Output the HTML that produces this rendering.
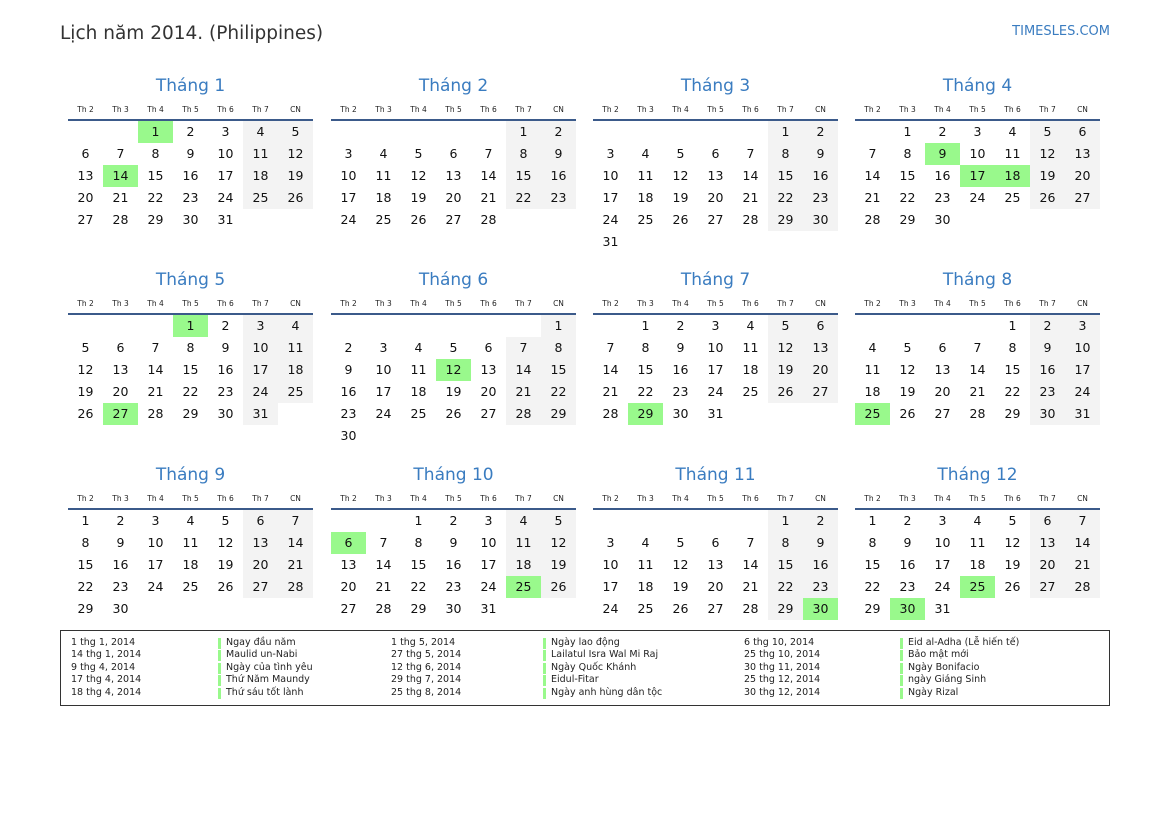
<!DOCTYPE html>
<html><head><meta charset="utf-8">
<style>
*{margin:0;padding:0;box-sizing:border-box}
body{width:1169px;height:827px;background:#fff;position:relative;font-family:"DejaVu Sans","Liberation Sans",sans-serif;color:#111;overflow:hidden}
.title{position:absolute;left:60px;top:21px;font-size:18.5px;color:#333;line-height:26px}
.site{position:absolute;right:59px;top:23px;font-size:13px;color:#3a7cc0;line-height:18px}
.m{position:absolute;width:245px}
.m h2{font-weight:normal;font-size:17px;color:#3a7cc0;text-align:center;height:20px;line-height:22px;margin-bottom:9px}
table{border-collapse:collapse;table-layout:fixed;width:245px}
td{width:35px;height:22px;text-align:center;font-size:12.5px;padding:0;line-height:22px}
tr.hd td{height:15px;line-height:12px;padding-bottom:3px;font-size:7.5px;color:#222;border-bottom:2px solid #3b5a8a}
td.w{background:#f3f3f3}
td.h{background:#99f98c}
.leg{position:absolute;left:60px;top:630px;width:1050px;height:76px;border:1.5px solid #333}
.c{position:absolute;top:6px;font-size:9.5px;line-height:12.4px;color:#222;white-space:nowrap}
.n div{position:relative;padding-left:8px}
.n div:before{content:"";position:absolute;left:0;top:1px;width:3px;height:11px;background:#99f98c}
</style></head><body>
<div class="title">Lịch năm 2014. (Philippines)</div>
<div class="site">TIMESLES.COM</div>

<div class="m" style="left:68px;top:75px"><h2>Tháng 1</h2><table>
<tr class="hd"><td>Th 2</td><td>Th 3</td><td>Th 4</td><td>Th 5</td><td>Th 6</td><td>Th 7</td><td>CN</td></tr>
<tr><td></td><td></td><td class="h">1</td><td>2</td><td>3</td><td class="w">4</td><td class="w">5</td></tr>
<tr><td>6</td><td>7</td><td>8</td><td>9</td><td>10</td><td class="w">11</td><td class="w">12</td></tr>
<tr><td>13</td><td class="h">14</td><td>15</td><td>16</td><td>17</td><td class="w">18</td><td class="w">19</td></tr>
<tr><td>20</td><td>21</td><td>22</td><td>23</td><td>24</td><td class="w">25</td><td class="w">26</td></tr>
<tr><td>27</td><td>28</td><td>29</td><td>30</td><td>31</td><td></td><td></td></tr>
</table></div>

<div class="m" style="left:331px;top:75px"><h2>Tháng 2</h2><table>
<tr class="hd"><td>Th 2</td><td>Th 3</td><td>Th 4</td><td>Th 5</td><td>Th 6</td><td>Th 7</td><td>CN</td></tr>
<tr><td></td><td></td><td></td><td></td><td></td><td class="w">1</td><td class="w">2</td></tr>
<tr><td>3</td><td>4</td><td>5</td><td>6</td><td>7</td><td class="w">8</td><td class="w">9</td></tr>
<tr><td>10</td><td>11</td><td>12</td><td>13</td><td>14</td><td class="w">15</td><td class="w">16</td></tr>
<tr><td>17</td><td>18</td><td>19</td><td>20</td><td>21</td><td class="w">22</td><td class="w">23</td></tr>
<tr><td>24</td><td>25</td><td>26</td><td>27</td><td>28</td><td></td><td></td></tr>
</table></div>

<div class="m" style="left:593px;top:75px"><h2>Tháng 3</h2><table>
<tr class="hd"><td>Th 2</td><td>Th 3</td><td>Th 4</td><td>Th 5</td><td>Th 6</td><td>Th 7</td><td>CN</td></tr>
<tr><td></td><td></td><td></td><td></td><td></td><td class="w">1</td><td class="w">2</td></tr>
<tr><td>3</td><td>4</td><td>5</td><td>6</td><td>7</td><td class="w">8</td><td class="w">9</td></tr>
<tr><td>10</td><td>11</td><td>12</td><td>13</td><td>14</td><td class="w">15</td><td class="w">16</td></tr>
<tr><td>17</td><td>18</td><td>19</td><td>20</td><td>21</td><td class="w">22</td><td class="w">23</td></tr>
<tr><td>24</td><td>25</td><td>26</td><td>27</td><td>28</td><td class="w">29</td><td class="w">30</td></tr>
<tr><td>31</td><td></td><td></td><td></td><td></td><td></td><td></td></tr>
</table></div>

<div class="m" style="left:855px;top:75px"><h2>Tháng 4</h2><table>
<tr class="hd"><td>Th 2</td><td>Th 3</td><td>Th 4</td><td>Th 5</td><td>Th 6</td><td>Th 7</td><td>CN</td></tr>
<tr><td></td><td>1</td><td>2</td><td>3</td><td>4</td><td class="w">5</td><td class="w">6</td></tr>
<tr><td>7</td><td>8</td><td class="h">9</td><td>10</td><td>11</td><td class="w">12</td><td class="w">13</td></tr>
<tr><td>14</td><td>15</td><td>16</td><td class="h">17</td><td class="h">18</td><td class="w">19</td><td class="w">20</td></tr>
<tr><td>21</td><td>22</td><td>23</td><td>24</td><td>25</td><td class="w">26</td><td class="w">27</td></tr>
<tr><td>28</td><td>29</td><td>30</td><td></td><td></td><td></td><td></td></tr>
</table></div>

<div class="m" style="left:68px;top:269px"><h2>Tháng 5</h2><table>
<tr class="hd"><td>Th 2</td><td>Th 3</td><td>Th 4</td><td>Th 5</td><td>Th 6</td><td>Th 7</td><td>CN</td></tr>
<tr><td></td><td></td><td></td><td class="h">1</td><td>2</td><td class="w">3</td><td class="w">4</td></tr>
<tr><td>5</td><td>6</td><td>7</td><td>8</td><td>9</td><td class="w">10</td><td class="w">11</td></tr>
<tr><td>12</td><td>13</td><td>14</td><td>15</td><td>16</td><td class="w">17</td><td class="w">18</td></tr>
<tr><td>19</td><td>20</td><td>21</td><td>22</td><td>23</td><td class="w">24</td><td class="w">25</td></tr>
<tr><td>26</td><td class="h">27</td><td>28</td><td>29</td><td>30</td><td class="w">31</td><td></td></tr>
</table></div>

<div class="m" style="left:331px;top:269px"><h2>Tháng 6</h2><table>
<tr class="hd"><td>Th 2</td><td>Th 3</td><td>Th 4</td><td>Th 5</td><td>Th 6</td><td>Th 7</td><td>CN</td></tr>
<tr><td></td><td></td><td></td><td></td><td></td><td></td><td class="w">1</td></tr>
<tr><td>2</td><td>3</td><td>4</td><td>5</td><td>6</td><td class="w">7</td><td class="w">8</td></tr>
<tr><td>9</td><td>10</td><td>11</td><td class="h">12</td><td>13</td><td class="w">14</td><td class="w">15</td></tr>
<tr><td>16</td><td>17</td><td>18</td><td>19</td><td>20</td><td class="w">21</td><td class="w">22</td></tr>
<tr><td>23</td><td>24</td><td>25</td><td>26</td><td>27</td><td class="w">28</td><td class="w">29</td></tr>
<tr><td>30</td><td></td><td></td><td></td><td></td><td></td><td></td></tr>
</table></div>

<div class="m" style="left:593px;top:269px"><h2>Tháng 7</h2><table>
<tr class="hd"><td>Th 2</td><td>Th 3</td><td>Th 4</td><td>Th 5</td><td>Th 6</td><td>Th 7</td><td>CN</td></tr>
<tr><td></td><td>1</td><td>2</td><td>3</td><td>4</td><td class="w">5</td><td class="w">6</td></tr>
<tr><td>7</td><td>8</td><td>9</td><td>10</td><td>11</td><td class="w">12</td><td class="w">13</td></tr>
<tr><td>14</td><td>15</td><td>16</td><td>17</td><td>18</td><td class="w">19</td><td class="w">20</td></tr>
<tr><td>21</td><td>22</td><td>23</td><td>24</td><td>25</td><td class="w">26</td><td class="w">27</td></tr>
<tr><td>28</td><td class="h">29</td><td>30</td><td>31</td><td></td><td></td><td></td></tr>
</table></div>

<div class="m" style="left:855px;top:269px"><h2>Tháng 8</h2><table>
<tr class="hd"><td>Th 2</td><td>Th 3</td><td>Th 4</td><td>Th 5</td><td>Th 6</td><td>Th 7</td><td>CN</td></tr>
<tr><td></td><td></td><td></td><td></td><td>1</td><td class="w">2</td><td class="w">3</td></tr>
<tr><td>4</td><td>5</td><td>6</td><td>7</td><td>8</td><td class="w">9</td><td class="w">10</td></tr>
<tr><td>11</td><td>12</td><td>13</td><td>14</td><td>15</td><td class="w">16</td><td class="w">17</td></tr>
<tr><td>18</td><td>19</td><td>20</td><td>21</td><td>22</td><td class="w">23</td><td class="w">24</td></tr>
<tr><td class="h">25</td><td>26</td><td>27</td><td>28</td><td>29</td><td class="w">30</td><td class="w">31</td></tr>
</table></div>

<div class="m" style="left:68px;top:464px"><h2>Tháng 9</h2><table>
<tr class="hd"><td>Th 2</td><td>Th 3</td><td>Th 4</td><td>Th 5</td><td>Th 6</td><td>Th 7</td><td>CN</td></tr>
<tr><td>1</td><td>2</td><td>3</td><td>4</td><td>5</td><td class="w">6</td><td class="w">7</td></tr>
<tr><td>8</td><td>9</td><td>10</td><td>11</td><td>12</td><td class="w">13</td><td class="w">14</td></tr>
<tr><td>15</td><td>16</td><td>17</td><td>18</td><td>19</td><td class="w">20</td><td class="w">21</td></tr>
<tr><td>22</td><td>23</td><td>24</td><td>25</td><td>26</td><td class="w">27</td><td class="w">28</td></tr>
<tr><td>29</td><td>30</td><td></td><td></td><td></td><td></td><td></td></tr>
</table></div>

<div class="m" style="left:331px;top:464px"><h2>Tháng 10</h2><table>
<tr class="hd"><td>Th 2</td><td>Th 3</td><td>Th 4</td><td>Th 5</td><td>Th 6</td><td>Th 7</td><td>CN</td></tr>
<tr><td></td><td></td><td>1</td><td>2</td><td>3</td><td class="w">4</td><td class="w">5</td></tr>
<tr><td class="h">6</td><td>7</td><td>8</td><td>9</td><td>10</td><td class="w">11</td><td class="w">12</td></tr>
<tr><td>13</td><td>14</td><td>15</td><td>16</td><td>17</td><td class="w">18</td><td class="w">19</td></tr>
<tr><td>20</td><td>21</td><td>22</td><td>23</td><td>24</td><td class="h">25</td><td class="w">26</td></tr>
<tr><td>27</td><td>28</td><td>29</td><td>30</td><td>31</td><td></td><td></td></tr>
</table></div>

<div class="m" style="left:593px;top:464px"><h2>Tháng 11</h2><table>
<tr class="hd"><td>Th 2</td><td>Th 3</td><td>Th 4</td><td>Th 5</td><td>Th 6</td><td>Th 7</td><td>CN</td></tr>
<tr><td></td><td></td><td></td><td></td><td></td><td class="w">1</td><td class="w">2</td></tr>
<tr><td>3</td><td>4</td><td>5</td><td>6</td><td>7</td><td class="w">8</td><td class="w">9</td></tr>
<tr><td>10</td><td>11</td><td>12</td><td>13</td><td>14</td><td class="w">15</td><td class="w">16</td></tr>
<tr><td>17</td><td>18</td><td>19</td><td>20</td><td>21</td><td class="w">22</td><td class="w">23</td></tr>
<tr><td>24</td><td>25</td><td>26</td><td>27</td><td>28</td><td class="w">29</td><td class="h">30</td></tr>
</table></div>

<div class="m" style="left:855px;top:464px"><h2>Tháng 12</h2><table>
<tr class="hd"><td>Th 2</td><td>Th 3</td><td>Th 4</td><td>Th 5</td><td>Th 6</td><td>Th 7</td><td>CN</td></tr>
<tr><td>1</td><td>2</td><td>3</td><td>4</td><td>5</td><td class="w">6</td><td class="w">7</td></tr>
<tr><td>8</td><td>9</td><td>10</td><td>11</td><td>12</td><td class="w">13</td><td class="w">14</td></tr>
<tr><td>15</td><td>16</td><td>17</td><td>18</td><td>19</td><td class="w">20</td><td class="w">21</td></tr>
<tr><td>22</td><td>23</td><td>24</td><td class="h">25</td><td>26</td><td class="w">27</td><td class="w">28</td></tr>
<tr><td>29</td><td class="h">30</td><td>31</td><td></td><td></td><td></td><td></td></tr>
</table></div>

<div class="leg">
<div class="c" style="left:10px"><div>1 thg 1, 2014</div><div>14 thg 1, 2014</div><div>9 thg 4, 2014</div><div>17 thg 4, 2014</div><div>18 thg 4, 2014</div></div>
<div class="c n" style="left:157px"><div>Ngay đầu năm</div><div>Maulid un-Nabi</div><div>Ngày của tình yêu</div><div>Thứ Năm Maundy</div><div>Thứ sáu tốt lành</div></div>
<div class="c" style="left:330px"><div>1 thg 5, 2014</div><div>27 thg 5, 2014</div><div>12 thg 6, 2014</div><div>29 thg 7, 2014</div><div>25 thg 8, 2014</div></div>
<div class="c n" style="left:482px"><div>Ngày lao động</div><div>Lailatul Isra Wal Mi Raj</div><div>Ngày Quốc Khánh</div><div>Eidul-Fitar</div><div>Ngày anh hùng dân tộc</div></div>
<div class="c" style="left:683px"><div>6 thg 10, 2014</div><div>25 thg 10, 2014</div><div>30 thg 11, 2014</div><div>25 thg 12, 2014</div><div>30 thg 12, 2014</div></div>
<div class="c n" style="left:839px"><div>Eid al-Adha (Lễ hiến tế)</div><div>Bảo mật mới</div><div>Ngày Bonifacio</div><div>ngày Giáng Sinh</div><div>Ngày Rizal</div></div>
</div>
</body></html>
